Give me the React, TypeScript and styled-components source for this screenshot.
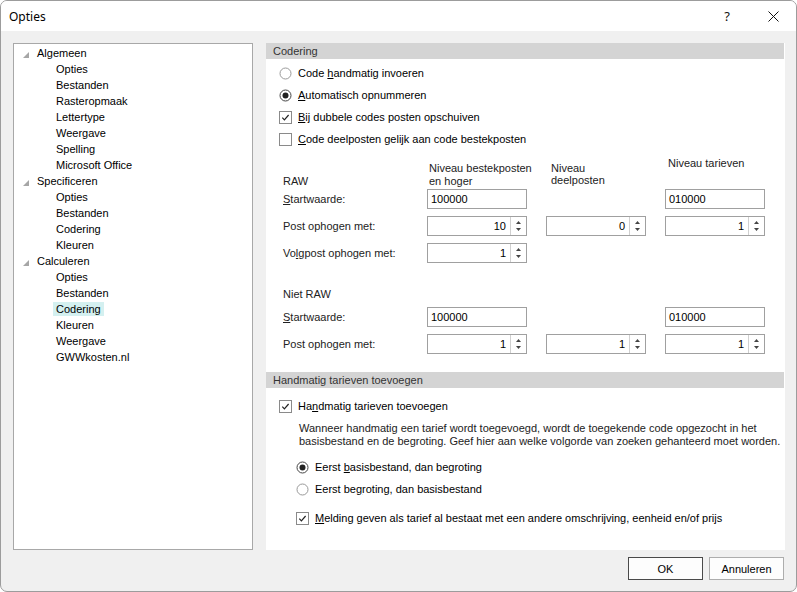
import React from "react";
import styled, { createGlobalStyle } from "styled-components";

const Global = createGlobalStyle`
  html, body { margin: 0; padding: 0; background: #ffffff; }
  body { font-family: "Liberation Sans", Arial, sans-serif; font-size: 11px; color: #000; }
  * { box-sizing: border-box; }
`;

const Window = styled.div`
  width: 797px;
  height: 592px;
  border: 1px solid #9c9c9c;
  border-radius: 7px;
  overflow: hidden;
  display: flex;
  flex-direction: column;
  background: #f0f0f0;
`;

const TitleBar = styled.div`
  height: 30px;
  flex: none;
  background: #ffffff;
  display: flex;
  align-items: center;
  padding-left: 8px;
`;

const Title = styled.div`
  flex: 1;
  font-family: "Noto Sans", "Open Sans", sans-serif;
  font-size: 12px;
  color: #000;
`;

const CaptionButton = styled.div`
  width: 46px;
  height: 30px;
  display: flex;
  align-items: center;
  justify-content: center;
  font-family: "Noto Sans", "Open Sans", sans-serif;
  font-size: 13px;
  color: #111;
`;

const Body = styled.div`
  flex: 1;
  display: flex;
  flex-direction: column;
  padding: 12px 11px 0 12px;
`;

const Main = styled.div`
  display: flex;
  gap: 13px;
  height: 507px;
`;

const TreePanel = styled.div`
  width: 240px;
  flex: none;
  background: #ffffff;
  border: 1px solid #a8a8a8;
  padding-top: 1px;
`;

const TreeRow = styled.div<{ $indent: number }>`
  height: 16px;
  display: flex;
  align-items: center;
  padding-left: ${(p) => p.$indent}px;
  gap: 8px;
  color: #000;
  white-space: nowrap;
`;

const TreeLabel = styled.span<{ $selected?: boolean }>`
  display: inline-block;
  line-height: 14px;
  padding: 0 3px;
  margin-left: -3px;
  background: ${(p) => (p.$selected ? "#d4f0f0" : "transparent")};
`;

const Expander = styled.svg`
  width: 6px;
  height: 6px;
  margin-top: 3px;
  flex: none;
`;

const ContentPanel = styled.div`
  flex: 1;
  background: #ffffff;
  display: flex;
  flex-direction: column;
`;

const SectionBar = styled.div<{ $top?: number }>`
  height: 16px;
  line-height: 16px;
  background: #d4d4d4;
  padding-left: 7px;
  margin-right: 1px;
  margin-top: ${(p) => p.$top ?? 0}px;
  color: #333;
  flex: none;
`;

const OptionList = styled.div<{ $top: number }>`
  display: flex;
  flex-direction: column;
  margin-top: ${(p) => p.$top}px;
`;

const OptionRow = styled.div<{ $indent: number; $height?: number; $top?: number }>`
  display: flex;
  align-items: center;
  height: ${(p) => p.$height ?? 22}px;
  padding-left: ${(p) => p.$indent}px;
  margin-top: ${(p) => p.$top ?? 0}px;
  gap: 6px;
  color: #000;
  white-space: nowrap;
`;

const Indicator = styled.svg`
  width: 13px;
  height: 13px;
  flex: none;
`;

const U = styled.span`
  text-decoration: underline;
  text-underline-offset: 1px;
`;

const FieldGrid = styled.div<{ $top: number; $height: number }>`
  display: grid;
  grid-template-columns: 125px 100px 100px 100px;
  column-gap: 19px;
  height: ${(p) => p.$height}px;
  margin-top: ${(p) => p.$top}px;
  padding-left: 17px;
  color: #222;
  white-space: nowrap;
`;

const GroupLabel = styled.div`
  align-self: end;
  line-height: 13px;
  margin-bottom: 1px;
`;

const FieldLabel = styled.div`
  align-self: center;
  line-height: 13px;
`;

const ColumnHeading = styled.div<{ $padLeft: number; $padTop: number; $lh: number }>`
  padding-left: ${(p) => p.$padLeft}px;
  padding-top: ${(p) => p.$padTop}px;
  line-height: ${(p) => p.$lh}px;
`;

const TextBox = styled.div`
  height: 20px;
  border: 1px solid #a0a0a0;
  padding-left: 3px;
  line-height: 18px;
  color: #000;
  background: #fff;
`;

const Spinner = styled.div`
  height: 20px;
  border: 1px solid #a0a0a0;
  display: flex;
  background: #fff;
`;

const SpinValue = styled.div`
  flex: 1;
  text-align: right;
  padding-right: 4px;
  line-height: 18px;
  color: #000;
`;

const SpinButtons = styled.div`
  width: 16px;
  border-left: 1px solid #d0d0d0;
  display: flex;
  flex-direction: column;
  align-items: center;
  justify-content: center;
  gap: 4px;
`;

const Arrow = styled.svg`
  width: 5px;
  height: 3px;
  display: block;
`;

const Paragraph = styled.div<{ $top: number }>`
  margin-top: ${(p) => p.$top}px;
  padding-left: 33px;
  line-height: 13px;
  color: #222;
  white-space: nowrap;
`;

const Footer = styled.div`
  display: flex;
  justify-content: flex-end;
  gap: 6px;
  margin-top: 7px;
  padding-right: 1px;
`;

const DialogButton = styled.div<{ $default?: boolean }>`
  width: 75px;
  height: 23px;
  display: flex;
  align-items: center;
  justify-content: center;
  background: #fdfdfd;
  border: 1px solid ${(p) => (p.$default ? "#4a4a4a" : "#adadad")};
  color: #000;
`;

const Radio = ({ checked }: { checked?: boolean }) => (
  <Indicator viewBox="0 0 13 13">
    <circle cx="6.5" cy="6.5" r="5.5" fill="#fff" stroke={checked ? "#444" : "#999"} strokeWidth="1" />
    {checked && <circle cx="6.5" cy="6.5" r="3" fill="#222" />}
  </Indicator>
);

const Check = ({ checked }: { checked?: boolean }) => (
  <Indicator viewBox="0 0 13 13">
    <rect x="0.5" y="0.5" width="12" height="12" fill="#fff" stroke="#8a8a8a" strokeWidth="1" />
    {checked && (
      <path d="M3.3 6.6 L5.4 8.8 L9.6 4" fill="none" stroke="#222" strokeWidth="1.2" />
    )}
  </Indicator>
);

const Spin = ({ value }: { value: string }) => (
  <Spinner>
    <SpinValue>{value}</SpinValue>
    <SpinButtons>
      <Arrow viewBox="0 0 5 3">
        <polygon points="2.5,0 5,3 0,3" fill="#444" />
      </Arrow>
      <Arrow viewBox="0 0 5 3">
        <polygon points="0,0 5,0 2.5,3" fill="#444" />
      </Arrow>
    </SpinButtons>
  </Spinner>
);

type TreeItem = { label: string; level: 0 | 1; selected?: boolean };

const tree: TreeItem[] = [
  { label: "Algemeen", level: 0 },
  { label: "Opties", level: 1 },
  { label: "Bestanden", level: 1 },
  { label: "Rasteropmaak", level: 1 },
  { label: "Lettertype", level: 1 },
  { label: "Weergave", level: 1 },
  { label: "Spelling", level: 1 },
  { label: "Microsoft Office", level: 1 },
  { label: "Specificeren", level: 0 },
  { label: "Opties", level: 1 },
  { label: "Bestanden", level: 1 },
  { label: "Codering", level: 1 },
  { label: "Kleuren", level: 1 },
  { label: "Calculeren", level: 0 },
  { label: "Opties", level: 1 },
  { label: "Bestanden", level: 1 },
  { label: "Codering", level: 1, selected: true },
  { label: "Kleuren", level: 1 },
  { label: "Weergave", level: 1 },
  { label: "GWWkosten.nl", level: 1 },
];

export default function App() {
  return (
    <>
      <Global />
      <Window>
        <TitleBar>
          <Title>Opties</Title>
          <CaptionButton>?</CaptionButton>
          <CaptionButton>
            <svg width="11" height="11" viewBox="0 0 11 11">
              <path d="M0.5 0.5 L10.5 10.5 M10.5 0.5 L0.5 10.5" stroke="#111" strokeWidth="1" />
            </svg>
          </CaptionButton>
        </TitleBar>
        <Body>
          <Main>
            <TreePanel>
              {tree.map((item, i) =>
                item.level === 0 ? (
                  <TreeRow key={i} $indent={9}>
                    <Expander viewBox="0 0 6 6">
                      <polygon points="6,0 6,6 0,6" fill="#a6a6a6" />
                    </Expander>
                    <TreeLabel>{item.label}</TreeLabel>
                  </TreeRow>
                ) : (
                  <TreeRow key={i} $indent={42}>
                    <TreeLabel $selected={item.selected}>{item.label}</TreeLabel>
                  </TreeRow>
                )
              )}
            </TreePanel>
            <ContentPanel>
              <SectionBar>Codering</SectionBar>
              <OptionList $top={3}>
                <OptionRow $indent={13}>
                  <Radio />
                  <span>
                    Code <U>h</U>andmatig invoeren
                  </span>
                </OptionRow>
                <OptionRow $indent={13}>
                  <Radio checked />
                  <span>
                    <U>A</U>utomatisch opnummeren
                  </span>
                </OptionRow>
                <OptionRow $indent={13}>
                  <Check checked />
                  <span>
                    <U>B</U>ij dubbele codes posten opschuiven
                  </span>
                </OptionRow>
                <OptionRow $indent={13}>
                  <Check />
                  <span>
                    <U>C</U>ode deelposten gelijk aan code bestekposten
                  </span>
                </OptionRow>
              </OptionList>

              <FieldGrid $top={7} $height={32}>
                <GroupLabel>RAW</GroupLabel>
                <ColumnHeading $padLeft={2} $padTop={5} $lh={13}>
                  Niveau bestekposten
                  <br />
                  en hoger
                </ColumnHeading>
                <ColumnHeading $padLeft={5} $padTop={5} $lh={12}>
                  Niveau
                  <br />
                  deelposten
                </ColumnHeading>
                <ColumnHeading $padLeft={3} $padTop={0} $lh={13}>
                  Niveau tarieven
                </ColumnHeading>
              </FieldGrid>
              <FieldGrid $top={0} $height={20}>
                <FieldLabel>
                  <U>S</U>tartwaarde:
                </FieldLabel>
                <TextBox>100000</TextBox>
                <div />
                <TextBox>010000</TextBox>
              </FieldGrid>
              <FieldGrid $top={7} $height={20}>
                <FieldLabel>Post ophogen met:</FieldLabel>
                <Spin value="10" />
                <Spin value="0" />
                <Spin value="1" />
              </FieldGrid>
              <FieldGrid $top={7} $height={20}>
                <FieldLabel>
                  Vo<U>l</U>gpost ophogen met:
                </FieldLabel>
                <Spin value="1" />
              </FieldGrid>

              <FieldGrid $top={25} $height={13}>
                <GroupLabel>Niet RAW</GroupLabel>
              </FieldGrid>
              <FieldGrid $top={6} $height={20}>
                <FieldLabel>
                  <U>S</U>tartwaarde:
                </FieldLabel>
                <TextBox>100000</TextBox>
                <div />
                <TextBox>010000</TextBox>
              </FieldGrid>
              <FieldGrid $top={7} $height={20}>
                <FieldLabel>Post ophogen met:</FieldLabel>
                <Spin value="1" />
                <Spin value="1" />
                <Spin value="1" />
              </FieldGrid>

              <SectionBar $top={18}>Handmatig tarieven toevoegen</SectionBar>
              <OptionRow $indent={13} $height={20} $top={8}>
                <Check checked />
                <span>
                  Ha<U>n</U>dmatig tarieven toevoegen
                </span>
              </OptionRow>
              <Paragraph $top={6}>
                Wanneer handmatig een tarief wordt toegevoegd, wordt de toegekende code opgezocht in het
                <br />
                basisbestand en de begroting. Geef hier aan welke volgorde van zoeken gehanteerd moet worden.
              </Paragraph>
              <OptionList $top={8}>
                <OptionRow $indent={30}>
                  <Radio checked />
                  <span>
                    Eerst <U>b</U>asisbestand, dan begroting
                  </span>
                </OptionRow>
                <OptionRow $indent={30}>
                  <Radio />
                  <span>
                    Eerst be<U>g</U>roting, dan basisbestand
                  </span>
                </OptionRow>
              </OptionList>
              <OptionRow $indent={30} $top={7}>
                <Check checked />
                <span>
                  <U>M</U>elding geven als tarief al bestaat met een andere omschrijving, eenheid en/of prijs
                </span>
              </OptionRow>
            </ContentPanel>
          </Main>
          <Footer>
            <DialogButton $default>OK</DialogButton>
            <DialogButton>Annuleren</DialogButton>
          </Footer>
        </Body>
      </Window>
    </>
  );
}
